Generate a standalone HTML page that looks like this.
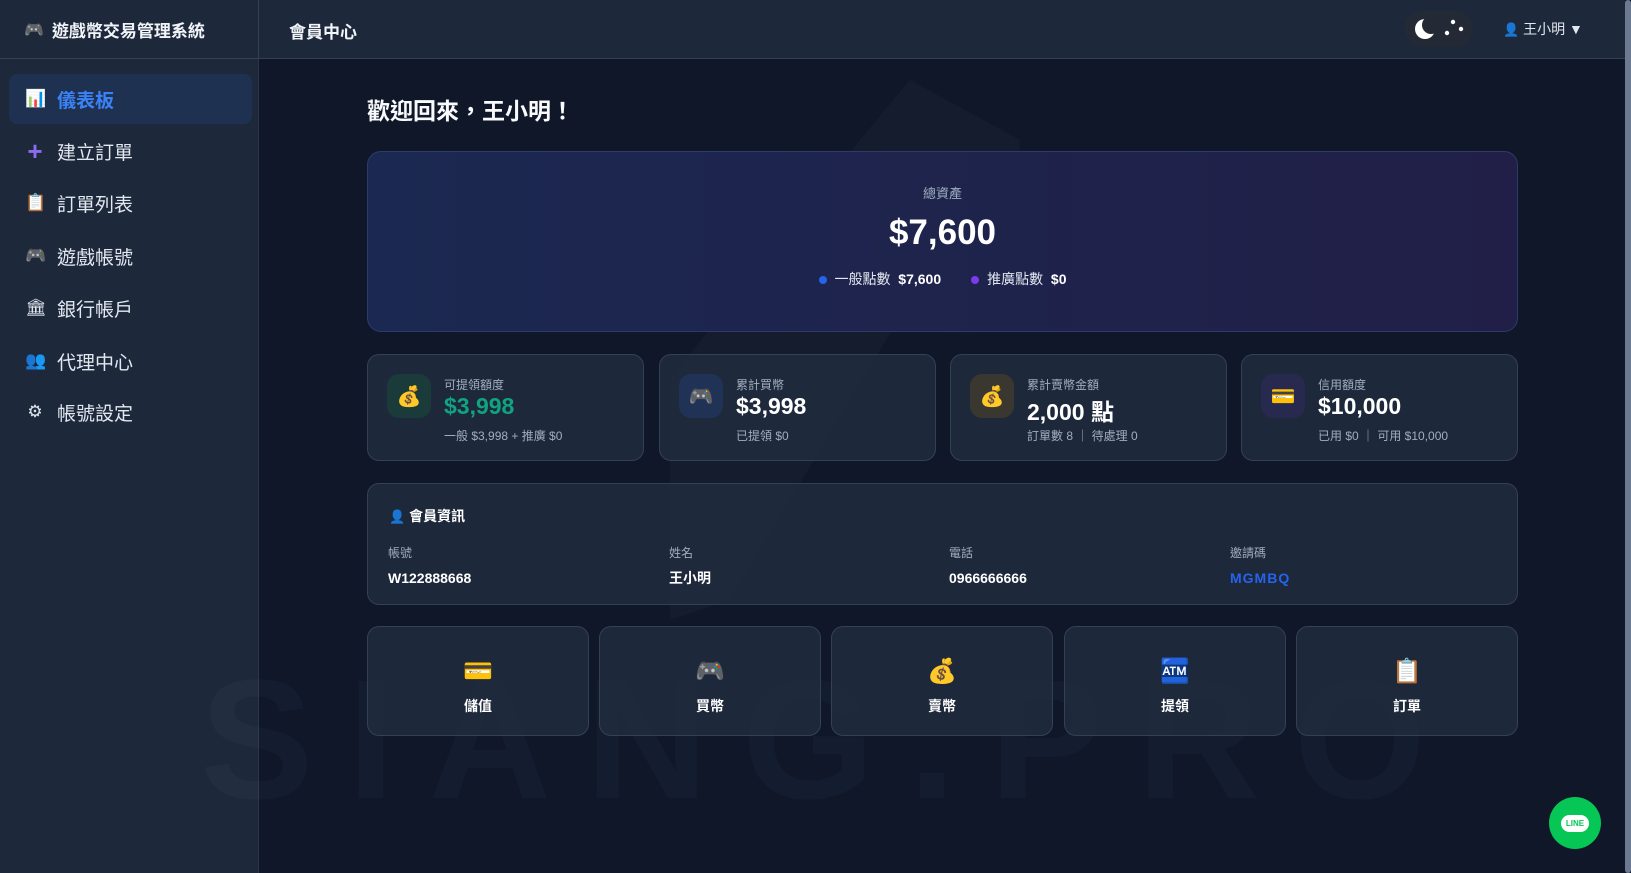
<!DOCTYPE html>
<html><head><meta charset="utf-8"><style>
*{box-sizing:border-box;margin:0;padding:0}
body{width:1631px;height:873px;overflow:hidden;background:#0f1729;font-family:"Liberation Sans","Noto Sans CJK TC",sans-serif;color:#e2e8f0;position:relative}
.top{position:absolute;left:0;top:0;width:1625px;height:59px;background:#1e283b;border-bottom:1px solid #334155}
.side{position:absolute;left:0;top:59px;width:259px;height:814px;background:#1e283b;border-right:1px solid #2b3649}
.brand{position:absolute;left:0;top:0;width:259px;height:59px;border-right:1px solid #334155;display:flex;align-items:center;padding-left:24px;font-weight:bold;font-size:17px;color:#f1f5f9}
.brand span.i{font-size:16px;margin-right:8px}
.ttl{position:absolute;left:289px;top:18px;font-weight:bold;font-size:17px;color:#f1f5f9}
.toggle{position:absolute;left:1405px;top:11px;width:68px;height:36px;border-radius:18px;background:#232a36}
.user{position:absolute;left:1503px;top:19px;font-size:14px;color:#e2e8f0}
.scroll{position:absolute;left:1625px;top:0;width:6px;height:873px;background:#0f1729}
.scroll div{width:6px;height:873px;background:#6b7a90;border-radius:3px}
.nav{position:absolute;left:9px;width:243px;height:50px;border-radius:8px;display:flex;align-items:center;padding-left:16px;font-size:19px;color:#e2e8f0}
.nav .i{width:20px;font-size:17px;margin-right:12px;text-align:center}
.nav.act{background:#1f3150;color:#3b82f6;font-weight:bold}
.welcome{position:absolute;left:367px;top:92px;font-size:23px;font-weight:bold;color:#f8fafc}
.hero{position:absolute;left:367px;top:151px;width:1151px;height:181px;border-radius:14px;border:1px solid #2c3b6b;background:linear-gradient(90deg,#1b2851,#211f47);text-align:center}
.card{position:absolute;border-radius:12px;border:1px solid #334155;background:rgba(33,44,62,.85)}
.stat{top:354px;width:277px;height:107px}
.ib{position:absolute;left:19px;top:19px;width:44px;height:44px;border-radius:12px;display:flex;align-items:center;justify-content:center;font-size:20px}
.lab{position:absolute;left:76px;top:21px;font-size:12px;color:#a0aec0}
.val{position:absolute;left:76px;top:38px;font-size:23px;font-weight:bold;color:#fff}
.sub{position:absolute;left:76px;top:72px;font-size:12px;color:#a0aec0}
.mi{position:absolute;top:60px}
.mi .l{font-size:12px;color:#a0aec0}
.mi .v{font-size:14px;font-weight:bold;color:#fff;margin-top:8px;height:18px;line-height:18px}
.ac{top:626px;width:222px;height:110px;text-align:center}
.ac .e{margin-top:30px;font-size:24px;height:30px}
.ac .t{margin-top:9px;font-size:14px;font-weight:bold;color:#fff}
.wm{position:absolute;left:200px;top:655px;font-size:170px;line-height:170px;font-weight:bold;color:rgba(148,163,184,.045);letter-spacing:34px;white-space:nowrap;font-family:"Liberation Sans",sans-serif}
</style></head><body>
<div class="top"></div>
<div class="brand"><span class="i">🎮</span>遊戲幣交易管理系統</div>
<div class="ttl">會員中心</div>
<div class="toggle"><svg width="68" height="36"><circle cx="20" cy="18" r="10" fill="#fff"/><circle cx="26" cy="14" r="9" fill="#232a36"/><circle cx="48" cy="11" r="2.2" fill="#fff"/><circle cx="42" cy="22" r="2.2" fill="#fff"/><circle cx="56" cy="18" r="2.2" fill="#fff"/></svg></div>
<div class="user"><span style="font-size:13px">👤</span> 王小明 ▼</div>
<div class="side">
<div class="nav act" style="top:15px"><span class="i">📊</span>儀表板</div>
<div class="nav" style="top:67px"><span class="i" style="color:#8b6cf0;font-size:26px;font-weight:bold">+</span>建立訂單</div>
<div class="nav" style="top:119px"><span class="i">📋</span>訂單列表</div>
<div class="nav" style="top:172px"><span class="i">🎮</span>遊戲帳號</div>
<div class="nav" style="top:224px"><span class="i">🏛</span>銀行帳戶</div>
<div class="nav" style="top:277px"><span class="i">👥</span>代理中心</div>
<div class="nav" style="top:328px"><span class="i">⚙</span>帳號設定</div>
</div>
<div class="wm">SIANG.PRO</div>
<svg style="position:absolute;left:610px;top:80px" width="420" height="560"><path d="M300 0 L410 60 L400 200 L300 220 L120 520 L60 540 L60 300 L200 120 Z" fill="rgba(148,163,184,.04)"/></svg>
<div class="welcome">歡迎回來，王小明！</div>
<div class="hero">
<div style="margin-top:31px;font-size:13px;color:#a0aec0">總資產</div>
<div style="margin-top:11px;font-size:35px;font-weight:bold;color:#fff">$7,600</div>
<div style="margin-top:16px;font-size:14px;color:#e2e8f0"><span style="display:inline-block;width:8px;height:8px;border-radius:4px;background:#2563eb;margin-right:8px"></span>一般點數 &nbsp;<b style="color:#fff">$7,600</b><span style="display:inline-block;width:30px"></span><span style="display:inline-block;width:8px;height:8px;border-radius:4px;background:#7c3aed;margin-right:8px"></span>推廣點數 &nbsp;<b style="color:#fff">$0</b></div>
</div>
<div class="card stat" style="left:367px"><div class="ib" style="background:#1b3a3a">💰</div><div class="lab">可提領額度</div><div class="val" style="color:#10a37f">$3,998</div><div class="sub">一般 $3,998 + 推廣 $0</div></div>
<div class="card stat" style="left:659px"><div class="ib" style="background:#213257">🎮</div><div class="lab">累計買幣</div><div class="val">$3,998</div><div class="sub">已提領 $0</div></div>
<div class="card stat" style="left:950px"><div class="ib" style="background:#3a3630">💰</div><div class="lab">累計賣幣金額</div><div class="val">2,000 點</div><div class="sub">訂單數 8 ｜ 待處理 0</div></div>
<div class="card stat" style="left:1241px"><div class="ib" style="background:#27294f">💳</div><div class="lab">信用額度</div><div class="val">$10,000</div><div class="sub">已用 $0 ｜ 可用 $10,000</div></div>
<div class="card" style="left:367px;top:483px;width:1151px;height:122px">
<div style="position:absolute;left:21px;top:22px;font-size:14px;font-weight:bold;color:#fff"><span style="font-size:13px">👤</span> 會員資訊</div>
<div class="mi" style="left:20px"><div class="l">帳號</div><div class="v">W122888668</div></div>
<div class="mi" style="left:301px"><div class="l">姓名</div><div class="v">王小明</div></div>
<div class="mi" style="left:581px"><div class="l">電話</div><div class="v">0966666666</div></div>
<div class="mi" style="left:862px"><div class="l">邀請碼</div><div class="v" style="color:#2563eb;letter-spacing:1px">MGMBQ</div></div>
</div>
<div class="card ac" style="left:367px"><div class="e">💳</div><div class="t">儲值</div></div>
<div class="card ac" style="left:599px"><div class="e">🎮</div><div class="t">買幣</div></div>
<div class="card ac" style="left:831px"><div class="e">💰</div><div class="t">賣幣</div></div>
<div class="card ac" style="left:1064px"><div class="e">🏧</div><div class="t">提領</div></div>
<div class="card ac" style="left:1296px"><div class="e">📋</div><div class="t">訂單</div></div>
<div style="position:absolute;left:1549px;top:797px;width:52px;height:52px;border-radius:26px;background:#06c755;display:flex;align-items:center;justify-content:center"><div style="background:#fff;color:#06c755;font-size:8px;font-weight:bold;padding:4px 5px;border-radius:9px">LINE</div></div>
<div class="scroll"><div></div></div>
</body></html>
